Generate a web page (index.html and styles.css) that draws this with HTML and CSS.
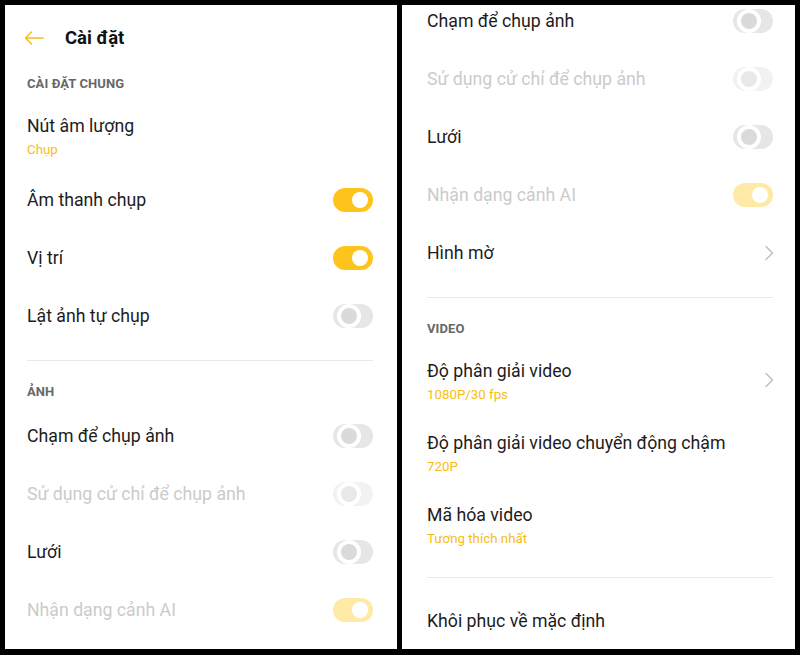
FILE: index.html
```html
<!DOCTYPE html>
<html lang="vi">
<head>
<meta charset="utf-8">
<title>Cài đặt</title>
<link rel="stylesheet" href="styles.css">
</head>
<body>
<div class="screens">
  <section class="panel panel-left">
    <header class="topbar">
      <svg class="back" width="20" height="16" viewBox="0 0 20 16" aria-hidden="true">
        <path d="M1.5 8H19M7.5 2L1.5 8L7.5 14" fill="none" stroke="#f7bd12" stroke-width="1.5" stroke-linecap="round" stroke-linejoin="round"/>
      </svg>
      <h1 class="title">Cài đặt</h1>
    </header>

    <div class="group">CÀI ĐẶT CHUNG</div>
    <div class="item">
      <div class="text">
        <div class="label">Nút âm lượng</div>
        <div class="sub">Chụp</div>
      </div>
    </div>
    <div class="row"><span class="label">Âm thanh chụp</span><span class="toggle on"></span></div>
    <div class="row"><span class="label">Vị trí</span><span class="toggle on"></span></div>
    <div class="row"><span class="label">Lật ảnh tự chụp</span><span class="toggle"></span></div>

    <div class="divider"></div>
    <div class="group">ẢNH</div>
    <div class="row"><span class="label">Chạm để chụp ảnh</span><span class="toggle"></span></div>
    <div class="row disabled"><span class="label">Sử dụng cử chỉ để chụp ảnh</span><span class="toggle"></span></div>
    <div class="row"><span class="label">Lưới</span><span class="toggle"></span></div>
    <div class="row disabled"><span class="label">Nhận dạng cảnh AI</span><span class="toggle on"></span></div>
  </section>

  <section class="panel panel-right">
    <div class="row row-first"><span class="label">Chạm để chụp ảnh</span><span class="toggle"></span></div>
    <div class="row disabled"><span class="label">Sử dụng cử chỉ để chụp ảnh</span><span class="toggle"></span></div>
    <div class="row"><span class="label">Lưới</span><span class="toggle"></span></div>
    <div class="row disabled"><span class="label">Nhận dạng cảnh AI</span><span class="toggle on"></span></div>
    <div class="row"><span class="label">Hình mờ</span>
      <svg class="chev" width="10" height="16" viewBox="0 0 10 16" aria-hidden="true"><path d="M2 1.5L8.5 8L2 14.5" fill="none" stroke="#bdbdbd" stroke-width="1.4" stroke-linecap="round" stroke-linejoin="round"/></svg>
    </div>

    <div class="divider"></div>
    <div class="group">VIDEO</div>
    <div class="item">
      <div class="text">
        <div class="label">Độ phân giải video</div>
        <div class="sub">1080P/30 fps</div>
      </div>
      <svg class="chev" width="10" height="16" viewBox="0 0 10 16" aria-hidden="true"><path d="M2 1.5L8.5 8L2 14.5" fill="none" stroke="#bdbdbd" stroke-width="1.4" stroke-linecap="round" stroke-linejoin="round"/></svg>
    </div>
    <div class="item">
      <div class="text">
        <div class="label">Độ phân giải video chuyển động chậm</div>
        <div class="sub">720P</div>
      </div>
    </div>
    <div class="item">
      <div class="text">
        <div class="label">Mã hóa video</div>
        <div class="sub">Tương thích nhất</div>
      </div>
    </div>

    <div class="divider divider-bottom"></div>
    <div class="row"><span class="label">Khôi phục về mặc định</span></div>
  </section>
</div>
</body>
</html>
```

FILE: styles.css
```css
* { box-sizing: border-box; }

html, body {
  margin: 0;
  padding: 0;
  background: #000;
}

body {
  width: 800px;
  height: 655px;
  overflow: hidden;
  font-family: Roboto, "Noto Sans", "Liberation Sans", sans-serif;
  color: #1c1c1c;
}

.screens {
  display: flex;
  gap: 5px;
  padding: 5px;
}

.panel {
  background: #fff;
  height: 644px;
  overflow: hidden;
  display: flex;
  flex-direction: column;
}

.panel-left {
  width: 392px;
  padding: 0 24px 0 22px;
}

.panel-right {
  width: 393px;
  padding: 0 22px 0 25px;
}

.topbar {
  height: 66px;
  display: flex;
  align-items: center;
  flex-shrink: 0;
}

.back {
  margin-left: -3px;
  flex-shrink: 0;
}

.title {
  margin: 0 0 0 21px;
  font-size: 18.5px;
  font-weight: 700;
  color: #111;
  line-height: 22px;
}

.group {
  flex-shrink: 0;
  font-size: 13px;
  font-weight: 700;
  color: #676767;
  line-height: 26px;
  padding-bottom: 2px;
  letter-spacing: 0.1px;
}

.row {
  flex-shrink: 0;
  height: 58px;
  display: flex;
  align-items: center;
  justify-content: space-between;
}

.row-first {
  margin-top: -13px;
}

.label {
  font-size: 17.7px;
  line-height: 22px;
  color: #1c1c1c;
  white-space: nowrap;
}

.disabled .label {
  color: #cbcbcb;
}

.item {
  flex-shrink: 0;
  height: 72px;
  padding: 16px 0 12px;
  display: flex;
  align-items: center;
  justify-content: space-between;
}

.item .text {
  display: flex;
  flex-direction: column;
  align-self: flex-start;
}

.sub {
  margin-top: 4px;
  font-size: 13.3px;
  line-height: 18px;
  color: #f7bd12;
}

.chev {
  flex-shrink: 0;
  margin-right: -1px;
}

.item .chev {
  margin-top: -4px;
}

.divider {
  flex-shrink: 0;
  height: 1px;
  background: #e9e9e9;
  margin: 15px 0 18px;
}

.divider-bottom {
  margin: 17px 0 14px;
}

.toggle {
  flex-shrink: 0;
  width: 40px;
  height: 24px;
  border-radius: 12px;
  background: #e6e6e6;
  display: flex;
  align-items: center;
  justify-content: flex-start;
  padding: 0 4px;
}

.toggle::after {
  content: "";
  width: 16px;
  height: 16px;
  border-radius: 50%;
  background: #dadada;
  border: 4px solid #fff;
}

.toggle.on {
  background: #ffc41c;
  justify-content: flex-end;
  padding: 0 5px;
}

.toggle.on::after {
  background: #fff;
  border: 0;
}

.disabled .toggle {
  background: #f2f2f2;
}

.disabled .toggle::after {
  background: #e8e8e8;
}

.disabled .toggle.on {
  background: #feeaa6;
}

.disabled .toggle.on::after {
  background: #fff;
}
```
